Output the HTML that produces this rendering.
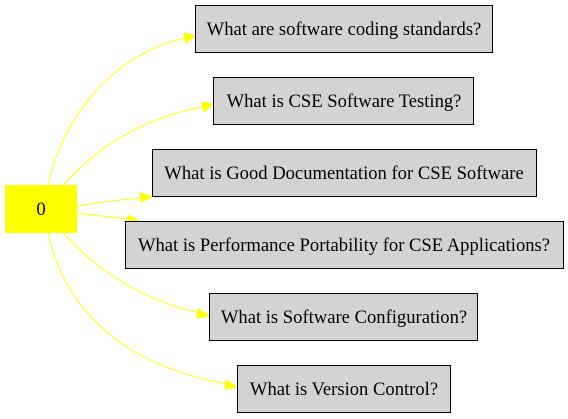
<!DOCTYPE html>
<html><head><style>body{margin:0;background:#fff}svg{display:block}</style></head><body>
<svg width="568" height="419" viewBox="0 0 568 419" xmlns="http://www.w3.org/2000/svg" font-family="Liberation Serif, serif" font-size="18.6">
<g fill="none" stroke="#ffff00" stroke-width="1">
<path d="M48,185 C62,120 110,55 185,38"/>
<path d="M63,185 C95,150 140,118 203,107"/>
<path d="M77,206 C95,203 120,200 140,198"/>
<path d="M77,213 C92,215 110,217 128,219"/>
<path d="M63,233 C95,268 140,300 200,313"/>
<path d="M48,233 C62,298 110,363 227,384"/>
</g>
<g fill="#ffff00" stroke="#ffff00">
<polygon points="195,36 184,33 186,43"/>
<polygon points="213,104 202,102 204,112"/>
<polygon points="152,197 140,193 141,202"/>
<polygon points="140,221 128,215 128,224"/>
<polygon points="210,316 198,309 197,318"/>
<polygon points="237,387 226,380 225,389"/>
</g>
<rect x="5" y="185" width="72" height="48" fill="#ffff00"/>
<text x="41" y="215" text-anchor="middle">0</text>
<g fill="#d3d3d3" stroke="#000">
<rect x="195.5" y="5.5" width="297" height="47"/>
<rect x="213.5" y="77.5" width="260" height="47"/>
<rect x="152.5" y="149.5" width="384" height="47"/>
<rect x="125.5" y="221.5" width="438" height="47"/>
<rect x="209.5" y="293.5" width="268" height="47"/>
<rect x="237.5" y="365.5" width="213" height="47"/>
</g>
<g text-anchor="middle">
<text x="344" y="35">What are software coding standards?</text>
<text x="344" y="107">What is CSE Software Testing?</text>
<text x="344" y="179">What is Good Documentation for CSE Software</text>
<text x="344" y="251">What is Performance Portability for CSE Applications?</text>
<text x="344" y="323">What is Software Configuration?</text>
<text x="344" y="395">What is Version Control?</text>
</g>
</svg>
</body></html>
